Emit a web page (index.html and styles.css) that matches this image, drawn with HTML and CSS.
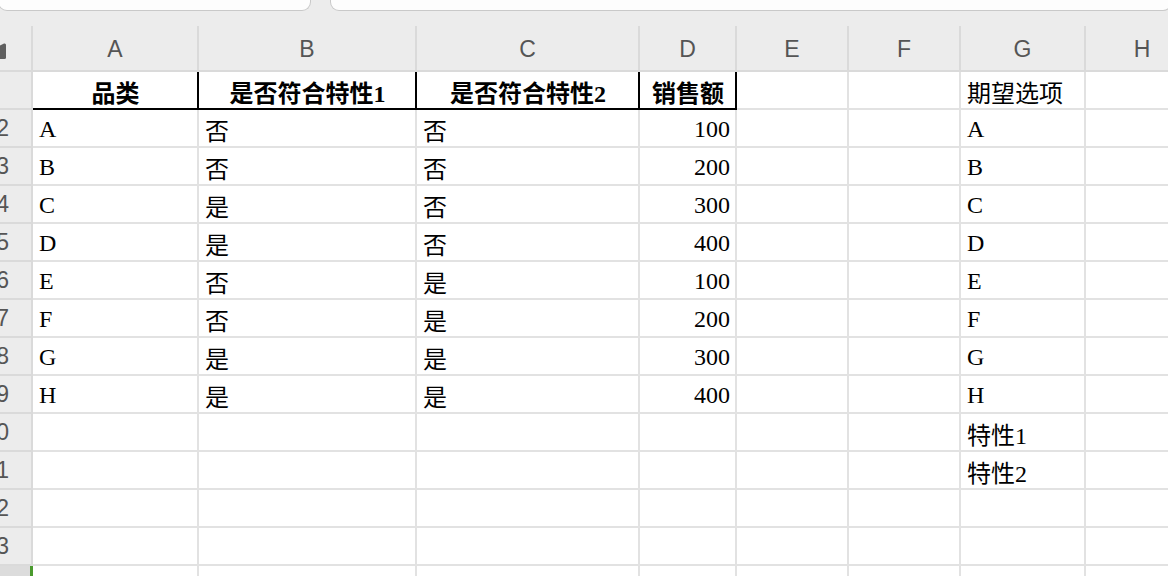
FILE: index.html
```html
<!DOCTYPE html>
<html lang="zh">
<head>
<meta charset="utf-8">
<title>Sheet</title>
<link rel="stylesheet" href="styles.css">
</head>
<body>
<div class="topbar">
  <div class="tab tab-left"></div>
  <div class="tab tab-right"></div>
</div>
<div class="sheet">
  <div class="corner"><svg class="corner-mark" width="8" height="16" viewBox="0 0 8 16"><path d="M0 3 L5 0.5 Q7 0 7 2 L7 14.5 Q7 16 5.5 16 L0 16 Z" fill="#5f5f5f"/></svg></div>
  <div class="colhead">A</div>
  <div class="colhead">B</div>
  <div class="colhead">C</div>
  <div class="colhead">D</div>
  <div class="colhead">E</div>
  <div class="colhead">F</div>
  <div class="colhead">G</div>
  <div class="colhead last">H</div>

  <div class="rowhead"></div>
  <div class="cell hdr">品类</div>
  <div class="cell hdr">是否符合特性1</div>
  <div class="cell hdr">是否符合特性2</div>
  <div class="cell hdr">销售额</div>
  <div class="cell"></div>
  <div class="cell"></div>
  <div class="cell">期望选项</div>
  <div class="cell"></div>

  <div class="rowhead">2</div>
  <div class="cell">A</div><div class="cell">否</div><div class="cell">否</div><div class="cell num">100</div>
  <div class="cell"></div><div class="cell"></div><div class="cell">A</div><div class="cell"></div>

  <div class="rowhead">3</div>
  <div class="cell">B</div><div class="cell">否</div><div class="cell">否</div><div class="cell num">200</div>
  <div class="cell"></div><div class="cell"></div><div class="cell">B</div><div class="cell"></div>

  <div class="rowhead">4</div>
  <div class="cell">C</div><div class="cell">是</div><div class="cell">否</div><div class="cell num">300</div>
  <div class="cell"></div><div class="cell"></div><div class="cell">C</div><div class="cell"></div>

  <div class="rowhead">5</div>
  <div class="cell">D</div><div class="cell">是</div><div class="cell">否</div><div class="cell num">400</div>
  <div class="cell"></div><div class="cell"></div><div class="cell">D</div><div class="cell"></div>

  <div class="rowhead">6</div>
  <div class="cell">E</div><div class="cell">否</div><div class="cell">是</div><div class="cell num">100</div>
  <div class="cell"></div><div class="cell"></div><div class="cell">E</div><div class="cell"></div>

  <div class="rowhead">7</div>
  <div class="cell">F</div><div class="cell">否</div><div class="cell">是</div><div class="cell num">200</div>
  <div class="cell"></div><div class="cell"></div><div class="cell">F</div><div class="cell"></div>

  <div class="rowhead">8</div>
  <div class="cell">G</div><div class="cell">是</div><div class="cell">是</div><div class="cell num">300</div>
  <div class="cell"></div><div class="cell"></div><div class="cell">G</div><div class="cell"></div>

  <div class="rowhead">9</div>
  <div class="cell">H</div><div class="cell">是</div><div class="cell">是</div><div class="cell num">400</div>
  <div class="cell"></div><div class="cell"></div><div class="cell">H</div><div class="cell"></div>

  <div class="rowhead">10</div>
  <div class="cell"></div><div class="cell"></div><div class="cell"></div><div class="cell"></div>
  <div class="cell"></div><div class="cell"></div><div class="cell">特性1</div><div class="cell"></div>

  <div class="rowhead">11</div>
  <div class="cell"></div><div class="cell"></div><div class="cell"></div><div class="cell"></div>
  <div class="cell"></div><div class="cell"></div><div class="cell">特性2</div><div class="cell"></div>

  <div class="rowhead">12</div>
  <div class="cell"></div><div class="cell"></div><div class="cell"></div><div class="cell"></div>
  <div class="cell"></div><div class="cell"></div><div class="cell"></div><div class="cell"></div>

  <div class="rowhead">13</div>
  <div class="cell"></div><div class="cell"></div><div class="cell"></div><div class="cell"></div>
  <div class="cell"></div><div class="cell"></div><div class="cell"></div><div class="cell"></div>

  <div class="rowhead sel"></div>
  <div class="cell"></div><div class="cell"></div><div class="cell"></div><div class="cell"></div>
  <div class="cell"></div><div class="cell"></div><div class="cell"></div><div class="cell"></div>
</div>
</body>
</html>
```

FILE: styles.css
```css
html, body {
  margin: 0;
  padding: 0;
  width: 1168px;
  height: 576px;
  overflow: hidden;
  background: #ececec;
}

.topbar {
  height: 26px;
  display: flex;
  gap: 19px;
  background: #ececec;
}

.tab {
  height: 10px;
  background: #fdfdfd;
  border: 1px solid #c9c9c9;
  border-top: none;
  border-radius: 0 0 9px 9px;
}

.tab-left {
  width: 311px;
  margin-left: -2px;
}

.tab-right {
  flex: 1;
  margin-right: -4px;
}

.sheet {
  display: grid;
  width: 1198px;
  grid-template-columns: 33px 166px 218px 223px 97px 112px 112px 125px 112px;
  grid-template-rows: 46px repeat(14, 38px);
}

.corner {
  background: #ececec;
  border-right: 2px solid #dadada;
  border-bottom: 2px solid #dadada;
  box-sizing: border-box;
  position: relative;
}

.corner-mark {
  position: absolute;
  left: -1px;
  top: 17px;
}

.colhead {
  background: #ececec;
  border-right: 2px solid #dadada;
  border-bottom: 2px solid #dadada;
  box-sizing: border-box;
  display: flex;
  align-items: center;
  justify-content: center;
  font-family: "Liberation Sans", Arial, sans-serif;
  font-size: 23px;
  color: #555;
  padding-top: 2px;
}

.colhead.last {
  border-right: none;
}

.rowhead {
  background: #ececec;
  border-right: 2px solid #dadada;
  border-bottom: 2px solid #dadada;
  box-sizing: border-box;
  display: flex;
  align-items: center;
  justify-content: flex-end;
  padding-right: 22px;
  font-family: "Liberation Sans", Arial, sans-serif;
  font-size: 23px;
  color: #555;
  white-space: nowrap;
}

.rowhead.sel {
  background: #dcdcdc;
  border-right: 3px solid #4a9a2e;
  border-bottom: none;
}

.cell {
  background: #fff;
  border-right: 2px solid #e2e2e2;
  border-bottom: 2px solid #e2e2e2;
  box-sizing: border-box;
  display: flex;
  align-items: center;
  padding: 2px 5px 0 6px;
  font-family: "Liberation Serif", "Noto Sans CJK SC", serif;
  font-size: 24px;
  color: #000;
  white-space: nowrap;
  overflow: hidden;
}

.cell.hdr {
  justify-content: center;
  font-weight: 700;
  border-right-color: #000;
  border-bottom-color: #000;
}

.cell.num {
  justify-content: flex-end;
}
```
